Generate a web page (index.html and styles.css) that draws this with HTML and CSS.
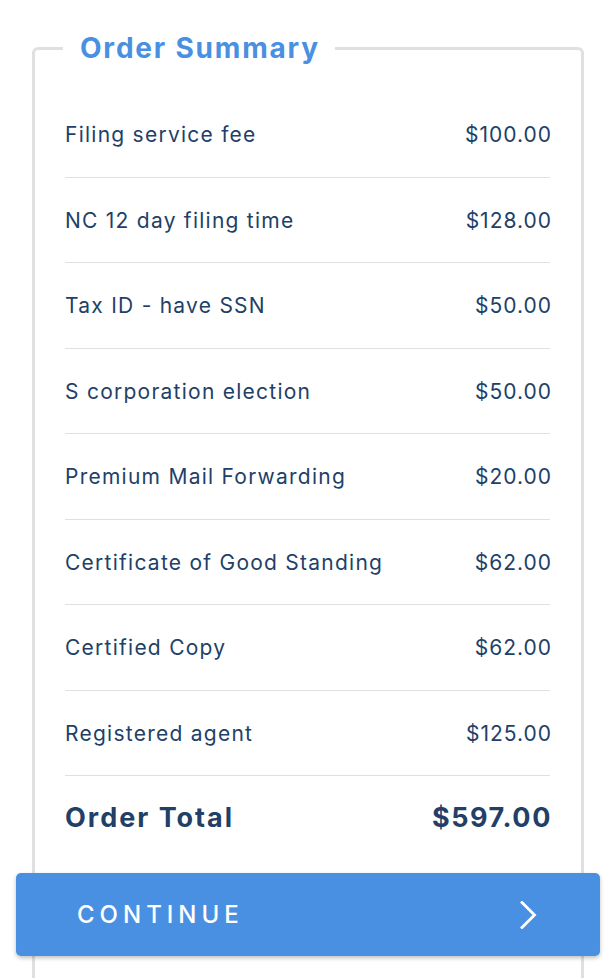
FILE: index.html
```html
<!DOCTYPE html>
<html lang="en">
<head>
<meta charset="utf-8">
<title>Order Summary</title>
<link rel="stylesheet" href="styles.css">
</head>
<body>
<div class="page">
  <fieldset class="summary">
    <legend class="summary-title">Order Summary</legend>
    <ul class="items">
      <li class="item"><span class="item-name">Filing service fee</span><span class="item-price">$100.00</span></li>
      <li class="item"><span class="item-name">NC 12 day filing time</span><span class="item-price">$128.00</span></li>
      <li class="item"><span class="item-name">Tax ID - have SSN</span><span class="item-price">$50.00</span></li>
      <li class="item"><span class="item-name">S corporation election</span><span class="item-price">$50.00</span></li>
      <li class="item"><span class="item-name">Premium Mail Forwarding</span><span class="item-price">$20.00</span></li>
      <li class="item"><span class="item-name">Certificate of Good Standing</span><span class="item-price">$62.00</span></li>
      <li class="item"><span class="item-name">Certified Copy</span><span class="item-price">$62.00</span></li>
      <li class="item"><span class="item-name">Registered agent</span><span class="item-price">$125.00</span></li>
    </ul>
    <div class="total"><span>Order Total</span><span class="total-price">$597.00</span></div>
    <button class="continue" type="button">
      <span class="continue-label">CONTINUE</span>
      <svg class="chevron" width="18" height="28" viewBox="0 0 18 28" aria-hidden="true"><path d="M3 1.5 L15.5 14 L3 26.5" fill="none" stroke="#ffffff" stroke-width="2.8" stroke-linecap="square"/></svg>
    </button>
    <div class="tail"></div>
  </fieldset>
</div>
</body>
</html>
```

FILE: styles.css
```css
html, body {
  margin: 0;
  padding: 0;
  background: #ffffff;
}
body {
  font-family: Inter, "DejaVu Sans", sans-serif;
  color: #223f68;
  overflow: hidden;
}
.page {
  width: 584px;
  padding: 31px 10px 0 16px;
}
.summary {
  margin: 0 16px;
  padding: 27px 31px 0 30px;
  border: 3px solid #e0e0e0;
  border-radius: 6px;
  min-width: 0;
}
.summary-title {
  margin-left: -2px;
  padding: 0 15px 0 17px;
  font-size: 28px;
  line-height: 34px;
  font-weight: 700;
  letter-spacing: 1.8px;
  color: #4a90e2;
}
.items {
  list-style: none;
  margin: 0;
  padding: 0;
}
.item {
  display: flex;
  justify-content: space-between;
  align-items: center;
  padding: 30px 0 29.5px;
  line-height: 25px;
  font-size: 21px;
  letter-spacing: 1.25px;
  border-bottom: 1px solid #e0e0e0;
}
.item-price {
  letter-spacing: 1px;
  margin-right: -2px;
}
.total {
  display: flex;
  justify-content: space-between;
  align-items: center;
  padding: 28px 0 41px;
  line-height: 28px;
  font-size: 27px;
  font-weight: 700;
  letter-spacing: 2px;
}
.total-price {
  letter-spacing: 1.6px;
  margin-right: -2px;
}
.continue {
  display: flex;
  align-items: center;
  justify-content: space-between;
  box-sizing: border-box;
  width: calc(100% + 99px);
  height: 83px;
  margin: 0 -50px 0 -49px;
  padding: 0 63px 0 61px;
  border: none;
  border-radius: 5px;
  background: #4a90e2;
  box-shadow: 0 2px 4px rgba(0, 0, 0, 0.25);
  color: #ffffff;
  font-family: Inter, "DejaVu Sans", sans-serif;
  font-size: 24px;
  font-weight: 500;
  letter-spacing: 5px;
  cursor: pointer;
}
.chevron {
  display: block;
}
.tail {
  height: 60px;
}
```
